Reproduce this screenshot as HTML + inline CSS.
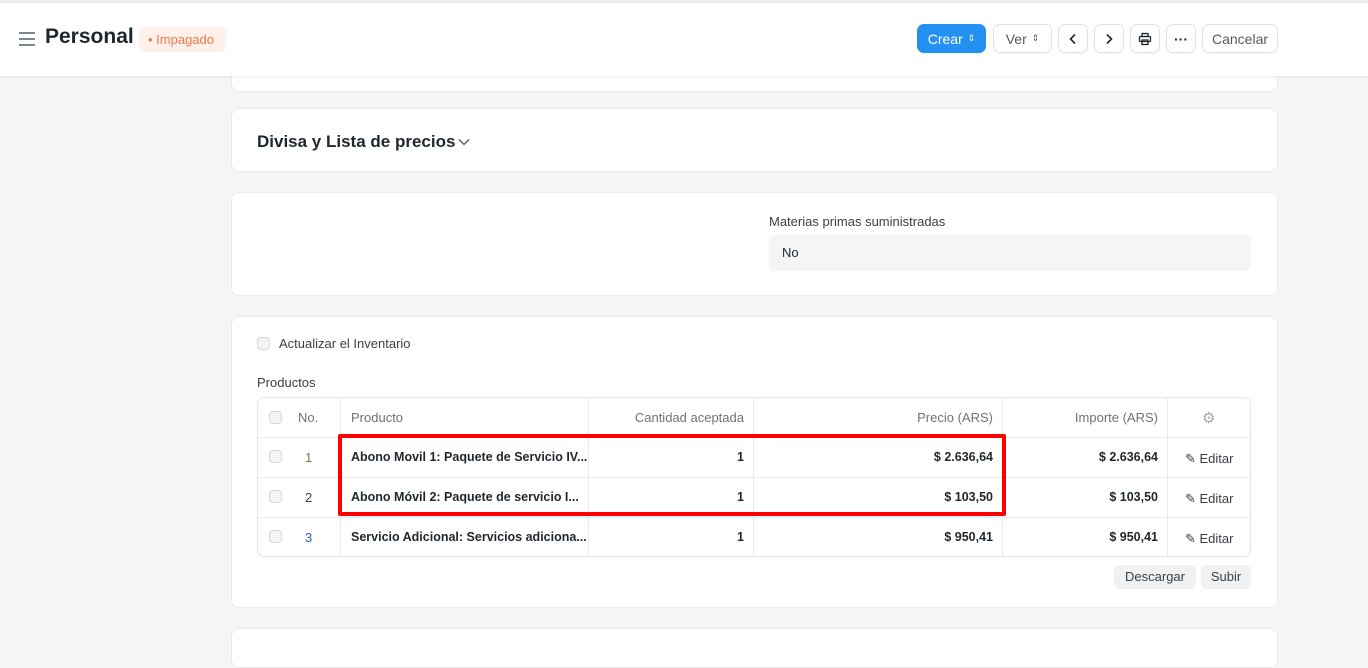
<!DOCTYPE html>
<html><head><meta charset="utf-8"><style>
*{box-sizing:border-box;margin:0;padding:0}
body{width:1368px;height:643px;overflow:hidden;background:#f4f5f6;font-family:"Liberation Sans",sans-serif;color:#1f272e;position:relative;font-size:13px}
.hdr{position:absolute;left:0;top:0;width:1368px;height:76px;background:#fff;border-top:3px solid #ebeef0;box-shadow:0 1px 2px rgba(0,0,0,.08);z-index:2}
.card{position:absolute;left:231px;width:1047px;background:#fff;border-radius:8px;border:1px solid #e8ebed}
.btn{position:absolute;top:21px;height:29px;border:1px solid #dfe2e5;border-radius:7px;background:#fff;font-size:14px;color:#525a61;display:flex;align-items:center;justify-content:center;box-shadow:0 1px 1px rgba(0,0,0,.04)}
.abs{position:absolute}
.cb{position:absolute;width:13px;height:13px;border:1px solid #d4d8dc;border-radius:4px;background:#f3f4f5}
.tbl{position:absolute;left:25px;top:80px;width:994px;height:160px;border:1px solid #e2e6e9;border-radius:7px}
.vl{position:absolute;top:0;bottom:0;width:1px;background:#e8ebed}
.hl{position:absolute;left:0;right:0;height:1px;background:#e8ebed}
.c{position:absolute;font-size:13px}
.b{font-weight:bold;color:#1f272e;font-size:12.5px}
.r{text-align:right}
</style></head><body>
<div class="hdr">
 <div class="abs" style="left:19px;top:29px;width:16px">
  <div style="height:2px;background:#7c8790;margin-bottom:4px"></div><div style="height:2px;background:#7c8790;margin-bottom:4px"></div><div style="height:2px;background:#7c8790"></div></div>
 <div class="abs" style="left:45px;top:22px;font-size:21px;font-weight:bold;color:#1f272e">Personal</div>
 <div class="abs" style="left:139px;top:24px;width:87px;height:25px;background:#fff1ea;border-radius:6px;color:#f0764a;font-size:13px;line-height:25px;padding-left:9px">• Impagado</div>
 <div class="btn" style="left:917px;width:69px;background:#2490ef;border-color:#2490ef;color:#fff">Crear <span style="font-size:9px;margin-left:5px">⇕</span></div>
 <div class="btn" style="left:993px;width:59px">Ver <span style="font-size:9px;margin-left:5px">⇕</span></div>
 <div class="btn" style="left:1058px;width:30px"><svg width="12" height="12" viewBox="0 0 12 12"><path d="M8 1.5L3.5 6 8 10.5" stroke="#1f272e" stroke-width="1.6" fill="none"/></svg></div>
 <div class="btn" style="left:1094px;width:30px"><svg width="12" height="12" viewBox="0 0 12 12"><path d="M4 1.5L8.5 6 4 10.5" stroke="#1f272e" stroke-width="1.6" fill="none"/></svg></div>
 <div class="btn" style="left:1130px;width:30px"><svg width="14" height="14" viewBox="0 0 14 14" fill="none" stroke="#1f272e" stroke-width="1.3"><rect x="4" y="1.5" width="6" height="3"/><rect x="1.5" y="4.5" width="11" height="5" rx="1"/><rect x="4" y="8" width="6" height="4.5"/></svg></div>
 <div class="btn" style="left:1166px;width:30px;font-weight:bold;color:#1f272e">···</div>
 <div class="btn" style="left:1202px;width:76px">Cancelar</div>
</div>
<div class="card" style="top:50px;height:42px"></div>
<div class="card" style="top:108px;height:64px">
 <div class="abs" style="left:25px;top:23px;font-size:17px;font-weight:bold">Divisa y Lista de precios</div>
 <svg class="abs" style="left:225px;top:28px" width="14" height="10" viewBox="0 0 14 10"><path d="M2 2.5L7 7.5 12 2.5" stroke="#525a61" stroke-width="1.3" fill="none"/></svg>
</div>
<div class="card" style="top:192px;height:104px">
 <div class="abs" style="left:537px;top:21px;font-size:13px;color:#383f45">Materias primas suministradas</div>
 <div class="abs" style="left:537px;top:42px;width:482px;height:36px;background:#f4f5f6;border-radius:6px;padding:10px 13px;font-size:13px">No</div>
</div>
<div class="card" style="top:316px;height:292px">
 <div class="cb" style="left:25px;top:20px"></div>
 <div class="abs" style="left:47px;top:19px;color:#383f45">Actualizar el Inventario</div>
 <div class="abs" style="left:25px;top:58px;color:#383f45">Productos</div>
 <div class="tbl">
  <div class="hl" style="top:39px"></div><div class="hl" style="top:79px"></div><div class="hl" style="top:119px"></div>
  <div class="vl" style="left:82px"></div><div class="vl" style="left:330px"></div><div class="vl" style="left:495px"></div><div class="vl" style="left:744px"></div><div class="vl" style="left:909px"></div>
  <div class="cb" style="left:11px;top:13px"></div><div class="cb" style="left:11px;top:52px"></div><div class="cb" style="left:11px;top:92px"></div><div class="cb" style="left:11px;top:132px"></div>
  <div class="c" style="left:40px;top:12px;color:#6b7379">No.</div>
  <div class="c" style="left:93px;top:12px;color:#6b7379">Producto</div>
  <div class="c r" style="left:330px;width:156px;top:12px;color:#6b7379">Cantidad aceptada</div>
  <div class="c r" style="left:495px;width:240px;top:12px;color:#6b7379">Precio (ARS)</div>
  <div class="c r" style="left:744px;width:156px;top:12px;color:#6b7379">Importe (ARS)</div>
  <div class="c" style="left:944px;top:11px;color:#a0a8ae;font-size:15px">⚙</div>
  <div class="c" style="left:47px;top:52px;color:#8a6d3b">1</div>
  <div class="c" style="left:47px;top:92px;color:#383f45">2</div>
  <div class="c" style="left:47px;top:132px;color:#2b5db8">3</div>
  <div class="c b" style="left:93px;top:52px">Abono Movil 1: Paquete de Servicio IV...</div>
  <div class="c b" style="left:93px;top:92px">Abono Móvil 2: Paquete de servicio I...</div>
  <div class="c b" style="left:93px;top:132px">Servicio Adicional: Servicios adiciona...</div>
  <div class="c b r" style="left:330px;width:156px;top:52px">1</div>
  <div class="c b r" style="left:330px;width:156px;top:92px">1</div>
  <div class="c b r" style="left:330px;width:156px;top:132px">1</div>
  <div class="c b r" style="left:495px;width:240px;top:52px">$ 2.636,64</div>
  <div class="c b r" style="left:495px;width:240px;top:92px">$ 103,50</div>
  <div class="c b r" style="left:495px;width:240px;top:132px">$ 950,41</div>
  <div class="c b r" style="left:744px;width:156px;top:52px">$ 2.636,64</div>
  <div class="c b r" style="left:744px;width:156px;top:92px">$ 103,50</div>
  <div class="c b r" style="left:744px;width:156px;top:132px">$ 950,41</div>
  <div class="c" style="left:927px;top:53px;color:#383f45">✎ Editar</div>
  <div class="c" style="left:927px;top:93px;color:#383f45">✎ Editar</div>
  <div class="c" style="left:927px;top:133px;color:#383f45">✎ Editar</div>
 </div>
 <div class="abs" style="left:882px;top:248px;width:82px;height:24px;background:#f0f1f2;border-radius:6px;line-height:24px;text-align:center;color:#383f45">Descargar</div>
 <div class="abs" style="left:969px;top:248px;width:50px;height:24px;background:#f0f1f2;border-radius:6px;line-height:24px;text-align:center;color:#383f45">Subir</div>
</div>
<div class="abs" style="left:338px;top:434px;width:668px;height:82px;border:4px solid #f00;border-radius:2px"></div>
<div class="card" style="top:628px;height:40px"></div>
</body></html>
